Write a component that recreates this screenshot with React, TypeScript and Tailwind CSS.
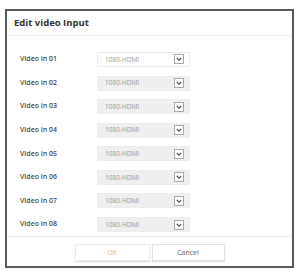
const inputs = ["01", "02", "03", "04", "05", "06", "07", "08"];

function Chevron() {
  return (
    <span className="flex h-[10px] w-[10px] items-center justify-center border border-[#a8a8a8] bg-white">
      <svg width="8" height="8" viewBox="0 0 8 8" fill="none">
        <path d="M1.8 3 4 5.2 6.2 3" stroke="#555" strokeWidth="1.1" />
      </svg>
    </span>
  );
}

export default function App() {
  return (
    <div className="h-[270px] w-[296px] bg-white pt-[9px] pl-[5px]" style={{ fontFamily: '"Open Sans", "Noto Sans", sans-serif' }}>
      <div className="flex h-[259px] w-[289px] flex-col border-2 border-[#5a5a5a] bg-white">
        {/* header */}
        <div className="flex h-[25px] items-center border-b border-[#ededed] pl-[7px]">
          <span className="text-[9.5px] font-bold text-[#333]">Edit video Input</span>
        </div>

        {/* rows */}
        <div className="flex flex-col pt-[12px]">
          {inputs.map((n, i) => (
            <div key={n} className="flex h-[23.6px] items-center">
              <span className="w-[90px] pl-[13px] text-[7px] font-semibold text-[#4a4a4a]">Video in {n}</span>
              <div
                className={
                  i === 0
                    ? "flex h-[15px] w-[93px] items-center justify-between border border-[#ececec] bg-white pl-[7px] pr-[5px]"
                    : "flex h-[15px] w-[93px] items-center justify-between border border-[#ececec] bg-[#efefef] pl-[7px] pr-[5px]"
                }
              >
                <span className="text-[6.5px] text-[#999]">1080-HDMI</span>
                <Chevron />
              </div>
            </div>
          ))}
        </div>

        {/* footer */}
        <div className="mt-auto flex h-[30px] items-start justify-center border-t border-[#ececec] pt-[7px]">
          <div className="flex">
            <button className="h-[17px] w-[75px] border border-[#ececec] bg-white text-[7px] text-[#f0b27a] shadow-[0_1px_1px_rgba(0,0,0,0.12)]">
              OK
            </button>
            <button className="ml-[2px] h-[17px] w-[73px] border border-[#e2e2e2] bg-white text-[7px] text-[#666] shadow-[0_1px_1px_rgba(0,0,0,0.12)]">
              Cancel
            </button>
          </div>
        </div>
      </div>
    </div>
  );
}
